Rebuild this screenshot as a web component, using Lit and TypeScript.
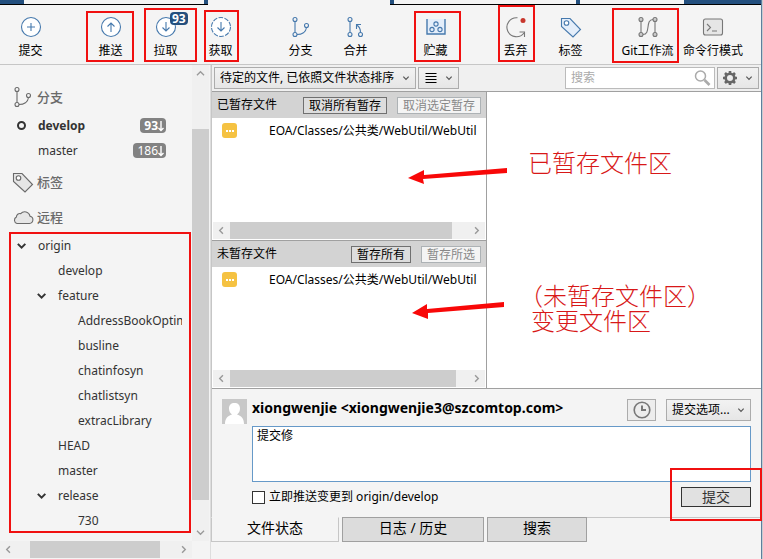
import { LitElement, html, css, svg, nothing } from "lit";
import { customElement, state } from "lit/decorators.js";
import { classMap } from "lit/directives/class-map.js";

const icons: Record<string, unknown> = {
  commit: svg`<circle cx="12" cy="12" r="9.5" fill="#fff"/><path d="M12 8v8M8 12h8"/>`,
  push: svg`<circle cx="12" cy="12" r="9.5" fill="#fff"/><path d="M12 17V8M8.5 11.5L12 8l3.5 3.5"/>`,
  pull: svg`<circle cx="12" cy="12" r="9.5" fill="#fff"/><path d="M12 7v9M8.5 12.5L12 16l3.5-3.5"/>`,
  fetch: svg`<circle cx="12" cy="12" r="9.5" fill="#fff" stroke-dasharray="4.6 1.4"/><path d="M12 7v9M8.5 12.5L12 16l3.5-3.5"/>`,
  branch: svg`<circle cx="6" cy="4.500" r="2"/><circle cx="6" cy="19.500" r="2"/><circle cx="17.500" cy="10.500" r="2"/><path d="M6 6.500v11M8 19.500c5 0 9-2.500 9.500-7"/>`,
  merge: svg`<circle cx="6" cy="4.500" r="2"/><circle cx="6" cy="19.500" r="2"/><circle cx="16.500" cy="19.500" r="2"/><path d="M6 6.500v11M16.500 17.500c0-4-1-6-4-7.500M12.500 14v-4.500h4.500"/>`,
  stash: svg`<path d="M3 4v15h18V4" fill="#e4eefa" stroke-width="1.400"/><circle cx="12" cy="9" r="2.100"/><circle cx="8" cy="14.500" r="2.100"/><circle cx="16" cy="14.500" r="2.100"/>`,
  discard: svg`<path d="M13.500 2.800A9.500 9.500 0 1 0 20 18M20.500 22v-5h-5" /><circle cx="19" cy="5.500" r="2.500" fill="#c8372d" stroke="none"/>`,
  tag: svg`<path d="M2.500 3.500h8.500l10.500 11-7.500 7.500L2.500 11.500z" fill="var(--tag-fill, #e4eefa)"/><circle cx="7.500" cy="8" r="2.300" fill="#fff"/>`,
  flow: svg`<path d="M5 6v12M19 6v12M7 19.500c8 0 2-15 10-15"/><g fill="#ccc"><circle cx="5" cy="4.500" r="2"/><circle cx="5" cy="19.500" r="2"/><circle cx="19" cy="4.500" r="2"/><circle cx="19" cy="19.500" r="2"/></g>`,
  terminal: svg`<rect x="2.500" y="4" width="19" height="16" rx="2" fill="#e6e6e6"/><path d="M6 9l3.500 3.500L6 16M11 16h5"/>`,
  cloud: svg`<path d="M6 18.500h12.500a3.700 3.700 0 0 0 .5-7.300 5.300 5.300 0 0 0-9.300-2.500 3.400 3.400 0 0 0-4.300 3.300A3.500 3.500 0 0 0 6 18.500z" fill="#e6e6e6"/>`,
  down: svg`<path d="M8 10l4 4 4-4" stroke-width="1.800"/>`,
  up: svg`<path d="M7 14.500l5-5 5 5" stroke-width="1.800"/>`,
  downWide: svg`<path d="M7 9.500l5 5 5-5" stroke-width="1.800"/>`,
  left: svg`<path d="M14 7.500l-4.500 4.500L14 16.500" stroke-width="2"/>`,
  right: svg`<path d="M10 7.500l4.500 4.500L10 16.500" stroke-width="2"/>`,
  expand: svg`<path d="M7 9.500l4.500 4.500 4.500-4.500" stroke-width="2.400"/>`,
  lines: svg`<path d="M6.500 7.500h11M6.500 10.500h11M6.500 13.500h11M6.500 16.500h11" stroke-width="1"/>`,
  gear: svg`<circle cx="12" cy="12" r="4.300" stroke-width="2.600"/><path d="M12 5v2.500M12 16.500V19M5 12h2.500M16.500 12H19M7 7l2 2M15 15l2 2M17 7l-2 2M9 15l-2 2" stroke-width="2.600"/>`,
  search: svg`<circle cx="10.500" cy="10" r="5" stroke-width="1.500"/><path d="M14.500 14l5 5" stroke-width="2.600"/>`,
  clock: svg`<circle cx="12" cy="12" r="7.800" stroke-width="1.600"/><path d="M12 7.500V12h4" stroke-width="2"/>`,
  behind: svg`<path d="M12 2v19M7 16l5 5 5-5" stroke-width="2.800"/>`,
};

const icon = (name: string, cls = "") =>
  html`<svg class="icon ${cls}" viewBox="0 0 24 24" aria-hidden="true">${icons[name]}</svg>`;

const toolGroups = [
  [{ icon: "commit", label: "提交" }],
  [
    { icon: "push", label: "推送" },
    { icon: "pull", label: "拉取", badge: "93" },
    { icon: "fetch", label: "获取" },
  ],
  [
    { icon: "branch", label: "分支" },
    { icon: "merge", label: "合并" },
  ],
  [{ icon: "stash", label: "贮藏" }],
  [
    { icon: "discard", label: "丢弃", gray: true },
    { icon: "tag", label: "标签" },
  ],
  [
    { icon: "flow", label: "Git工作流", gray: true, slim: true },
    { icon: "terminal", label: "命令行模式", gray: true, wide: true },
  ],
] as { icon: string; label: string; badge?: string; gray?: boolean; slim?: boolean; wide?: boolean }[][];

const remotes = [
  { name: "origin", level: 0, open: true },
  { name: "develop", level: 1 },
  { name: "feature", level: 1, open: true },
  { name: "AddressBookOptim", level: 2 },
  { name: "busline", level: 2 },
  { name: "chatinfosyn", level: 2 },
  { name: "chatlistsyn", level: 2 },
  { name: "extracLibrary", level: 2 },
  { name: "HEAD", level: 1 },
  { name: "master", level: 1 },
  { name: "release", level: 1, open: true },
  { name: "730", level: 2 },
];

@customElement("app-root")
export class AppRoot extends LitElement {
  @state() private tab = 0;

  static styles = css`
    :host {
      display: flex;
      flex-direction: column;
      position: relative;
      box-sizing: border-box;
      min-height: 100vh;
      overflow: hidden;
      padding-right: 1px;
      border-right: 1px solid #c8ccd0;
      box-shadow: inset -1px 0 #5d7f9d;
      background: #f4f4f4;
      color: #000;
      font: 12px/16px "Noto Sans", "Noto Sans CJK SC", sans-serif;
    }
    * { box-sizing: border-box; }
    button, select, input, textarea { font: inherit; color: inherit; margin: 0; border-radius: 0; }
    button { background: none; border: 0; padding: 0; }
    ul { list-style: none; margin: 0; padding: 0; }
    .icon { width: 24px; height: 24px; fill: none; stroke: currentColor; stroke-width: 1.1; flex: none; display: block; }
    .small { width: 16px; height: 16px; }

    .strip { display: flex; height: 5px; flex: none; }
    .strip span { background: #f4f4f4; border-bottom: 1px solid #000; }
    .strip .navy { background: #234f7e; }
    .strip .plain { border-color: #f4f4f4; }
    .w24 { flex: 0 0 24px; } .w180 { flex: 0 0 180px; } .w4 { flex: 0 0 4px; }
    .w182 { flex: 0 0 182px; } .w104 { flex: 0 0 104px; } .rest { flex: 1; }

    .toolbar { display: flex; gap: 25px; padding: 10px 3px 0; height: 60px; flex: none; border-bottom: 1px solid #c6c6c6; }
    .group { display: flex; flex: none; }
    .tool { position: relative; display: flex; flex: none; flex-direction: column; align-items: center; justify-content: start; gap: 4px; width: 55px; height: 48px; white-space: nowrap; color: #000; }
    .tool.wide { width: 82px; }
    .tool.slim { width: 49px; }
    .tool .icon { color: #4679ad; }
    .tool.gray .icon { color: #777; }
    .badge { position: absolute; left: 32px; top: -3px; padding: 0 2px; border-radius: 4px; background: #234f7e; color: #fff; font-weight: 700; line-height: 13px; }

    .body { flex: 1; display: grid; grid-template-columns: 211px minmax(0, 1fr); min-height: 0; }
    .side { display: grid; grid-template-columns: minmax(0, 1fr) 17px; grid-template-rows: minmax(0, 1fr) 17px; padding: 0 1px 1px 0; border-right: 1px solid #ddd; color: #333; }
    .nav { padding: 13px 10px 0 0; }
    .head { display: flex; align-items: center; gap: 2px; height: 33px; margin: 2px 0 0 11px; color: #6a6a6a; font-weight: 500; font-size: 13px; --tag-fill: #e6e6e6; }
    .row { display: flex; align-items: center; height: 25px; width: 100%; padding-left: 12px; overflow: hidden; white-space: nowrap; text-align: left; }
    .row.level1 { padding-left: 32px; }
    .row.level2 { padding-left: 52px; }
    .mark { flex: 0 0 26px; display: flex; }
    .ring { width: 9px; height: 9px; margin-left: 5px; border: 2px solid #333; border-radius: 50%; }
    .mark .icon { width: 20px; height: 20px; }
    .count { display: flex; align-items: center; margin-left: auto; margin-right: 16px; padding: 0 2px 0 4px; border-radius: 4px; background: #828282; color: #fff; line-height: 15px; }
    .count .icon { width: 12px; height: 12px; margin: 0 -3px; }
    .current { font-weight: 700; }

    .scroll { display: flex; align-items: center; background: #f0f0f0; color: #999; }
    .scroll button { flex: 0 0 17px; height: 17px; }
    .scroll .icon { width: 17px; height: 17px; }
    .scroll .pos { background: #cdcdcd; align-self: stretch; }
    .vert { flex-direction: column; }
    .vert button { width: 17px; }
    .vert .before { flex: 47; } .vert .pos { flex: 371; } .vert .after { flex: 24; }
    .nav-h .before { flex: 13; } .nav-h .pos { flex: 128; } .nav-h .after { flex: 15; }
    .list-a .pos { flex: 222; } .list-a .after { flex: 16; }
    .list-b .pos { flex: 226; } .list-b .after { flex: 12; }

    .main { display: flex; flex-direction: column; min-width: 0; padding-bottom: 17px; }
    .pane { display: flex; flex-direction: column; flex: 1; border-left: 1px solid #c6c6c6; min-height: 0; }
    .filters { display: flex; gap: 2px; height: 27px; padding: 2px; background: #f0f0f0; border-bottom: 1px solid #a0a0a0; }
    .drop { position: relative; display: flex; align-items: center; height: 22px; border: 1px solid #acacac; background: linear-gradient(#f2f2f2, #e6e6e6); }
    .drop select { appearance: none; width: 100%; height: 20px; padding: 0 20px 0 5px; border: 0; background: none; }
    .drop > .small { position: absolute; right: 1px; pointer-events: none; color: #555; }
    .sort { width: 202px; }
    .mode { width: 41px; }
    .cog { width: 42px; color: #666; }
    .find { margin-left: auto; display: flex; align-items: center; width: 150px; height: 22px; border: 1px solid #bbb; background: #fff; color: #aaa; }
    .find input { flex: 1; min-width: 0; border: 0; background: none; padding: 0 5px; outline: 0; }
    .find input::placeholder { color: #aaa; }

    .files { flex: 1; display: grid; grid-template-columns: 275px minmax(0, 1fr); background: #fff; border-bottom: 1px solid #a0a0a0; }
    .lists { display: grid; grid-template-rows: 1fr 1fr; border-right: 1px solid #a0a0a0; }
    .list { display: flex; flex-direction: column; }
    .list + .list { border-top: 1px solid #a0a0a0; }
    .bar { display: flex; align-items: center; gap: 10px; height: 26px; padding: 0 5px; background: #d3d3d3; }
    .bar h2 { flex: 1; margin: 0; font: inherit; }
    .bar button { height: 17px; padding: 0 5px; border: 1px solid #707070; background: #ddd; line-height: 15px; white-space: nowrap; }
    .bar button:disabled { border-color: #adb2b5; background: #f4f4f4; color: #888; }
    .file { display: flex; align-items: center; gap: 32px; height: 25px; padding-left: 10px; white-space: nowrap; overflow: hidden; }
    .status { display: flex; align-items: center; justify-content: center; gap: 1px; width: 15px; height: 15px; flex: none; border-radius: 3px; background: #f5c242; }
    .status i { width: 2px; height: 2px; background: #fff; }
    .list .scroll { height: 17px; margin: auto 1px 1px; }

    .compose { display: grid; grid-template-columns: 25px minmax(0, 1fr); align-content: start; column-gap: 5px; padding: 10px 10px 0; height: 128px; }
    .avatar { width: 25px; height: 25px; display: block; }
    .who { display: flex; align-items: start; gap: 10px; height: 27px; }
    .who strong { flex: 1; font-size: 14px; line-height: 18px; white-space: nowrap; }
    .clock { display: flex; align-items: center; justify-content: center; width: 29px; height: 22px; border: 1px solid #acacac; background: #ededed; color: #777; }
    .clock .icon { width: 24px; height: 24px; }
    .opts { width: 85px; }
    .message { grid-column: 2; display: block; width: 100%; height: 56px; padding: 1px 4px; resize: none; border: 1px solid #6699c8; outline: 0; background: #fff; }
    .submit { grid-column: 2; display: flex; align-items: center; justify-content: space-between; height: 30px; }
    .submit label { display: flex; align-items: center; gap: 4px; }
    .submit input { appearance: none; width: 13px; height: 13px; border: 1px solid #333; background: #fff; }
    .submit button { width: 70px; height: 20px; border: 1px solid #333; background: #e1e1e1; color: #333; font-size: 14px; line-height: 18px; }

    .tabs { display: flex; gap: 3px; height: 25px; flex: none; }
    .tabs button { width: 142px; border: 1px solid #a0a0a0; background: #dcdcdc; font-size: 14px; line-height: 18px; padding-bottom: 4px; }
    .tabs .first { width: 128px; }
    .tabs .last { width: 100px; }
    .tabs button.active { border-color: #f4f4f4 #c6c6c6 #c6c6c6; background: #f4f4f4; }
    .tabs .fill { flex: 1; margin-left: -3px; border-top: 1px solid #c6c6c6; }

    .notes { position: absolute; left: 0; top: 0; width: 763px; height: 559px; pointer-events: none; }
    .notes rect { fill: none; stroke: #f01010; stroke-width: 2; }
    .arrow { fill: #f80808; }
    .note { position: absolute; left: 528px; top: 149px; margin: 0; color: #d81818; font: 24px/25px "Noto Sans CJK SC", sans-serif; font-weight: 300; white-space: nowrap; }
    .note.changed { left: 519px; top: 282px; }
    .note span { display: block; }
    .note .under { padding-left: 12px; }
  `;

  private scroll(cls: string, vertical = false) {
    return html`<div class="scroll ${cls} ${vertical ? "vert" : ""}">
      <button aria-label=${vertical ? "向上滚动" : "向左滚动"}>${icon(vertical ? "up" : "left")}</button>
      <span class="before"></span><span class="pos"></span><span class="after"></span>
      <button aria-label=${vertical ? "向下滚动" : "向右滚动"}>${icon(vertical ? "downWide" : "right")}</button>
    </div>`;
  }

  private list(title: string, all: string, selected: string, cls: string) {
    return html`<section class="list">
      <div class="bar"><h2>${title}</h2><button>${all}</button><button disabled>${selected}</button></div>
      <div class="file"><span class="status"><i></i><i></i><i></i></span><span>EOA/Classes/公共类/WebUtil/WebUtil</span></div>
      ${this.scroll(cls)}
    </section>`;
  }

  private tabButton(index: number, label: string, cls: string) {
    return html`<button role="tab" aria-selected=${this.tab === index}
      class="${cls} ${this.tab === index ? "active" : ""}" @click=${() => (this.tab = index)}>${label}</button>`;
  }

  render() {
    return html`
      <div class="strip">
        <span class="navy w24"></span><span class="w180"></span><span class="navy w4"></span>
        <span class="plain w182"></span><span class="navy w4"></span><span class="w182"></span>
        <span class="navy w4"></span><span class="w104"></span><span class="navy rest"></span>
      </div>
      <nav class="toolbar">
        ${toolGroups.map((group) => html`<div class="group">
          ${group.map((t) => html`<button class=${classMap({ tool: true, gray: !!t.gray, slim: !!t.slim, wide: !!t.wide })}>
            ${icon(t.icon)}<span>${t.label}</span>${t.badge ? html`<span class="badge">${t.badge}</span>` : nothing}
          </button>`)}
        </div>`)}
      </nav>
      <div class="body">
        <aside class="side">
          <div class="nav">
            <div class="head">${icon("branch")}分支</div>
            <button class="row current"><span class="mark"><span class="ring"></span></span>develop<span class="count">93${icon("behind")}</span></button>
            <button class="row"><span class="mark"></span>master<span class="count">186${icon("behind")}</span></button>
            <div class="head">${icon("tag")}标签</div>
            <div class="head">${icon("cloud")}远程</div>
            <ul>
              ${remotes.map((r) => html`<li><button class="row level${r.level}">
                <span class="mark">${r.open ? icon("expand") : nothing}</span>${r.name}
              </button></li>`)}
            </ul>
          </div>
          ${this.scroll("", true)}
          ${this.scroll("nav-h")}
        </aside>
        <main class="main">
          <div class="pane">
            <div class="filters">
              <div class="drop sort">
                <select aria-label="排序"><option>待定的文件, 已依照文件状态排序</option></select>${icon("down", "small")}
              </div>
              <button class="drop mode" aria-label="视图">${icon("lines")}${icon("down", "small")}</button>
              <label class="find"><input aria-label="搜索" placeholder="搜索" />${icon("search")}</label>
              <button class="drop cog" aria-label="设置">${icon("gear")}${icon("down", "small")}</button>
            </div>
            <div class="files">
              <div class="lists">
                ${this.list("已暂存文件", "取消所有暂存", "取消选定暂存", "list-a")}
                ${this.list("未暂存文件", "暂存所有", "暂存所选", "list-b")}
              </div>
              <div class="diff"></div>
            </div>
            <form class="compose" @submit=${(e: Event) => e.preventDefault()}>
              <svg class="avatar" viewBox="0 0 25 25" aria-hidden="true">
                <rect width="25" height="25" fill="#c8c8c8"/>
                <path d="M3 25c0-6 3-8 7-9.500-2-1.500-3-3.500-3-6C7 6 9 4 12.500 4S18 6 18 9.500c0 2.500-1 4.500-3 6 4 1.500 7 3.500 7 9.500z" fill="#fff"/>
              </svg>
              <div class="who">
                <strong>xiongwenjie &lt;xiongwenjie3@szcomtop.com&gt;</strong>
                <button type="button" class="clock" aria-label="历史提交信息">${icon("clock")}</button>
                <div class="drop opts"><select aria-label="提交选项"><option>提交选项...</option></select>${icon("down", "small")}</div>
              </div>
              <textarea class="message" aria-label="提交信息" .value=${"提交修"}></textarea>
              <div class="submit">
                <label><input type="checkbox" />立即推送变更到 origin/develop</label>
                <button>提交</button>
              </div>
            </form>
          </div>
          <div class="tabs" role="tablist">
            ${this.tabButton(0, "文件状态", "first")}
            ${this.tabButton(1, "日志 / 历史", "")}
            ${this.tabButton(2, "搜索", "last")}
            <span class="fill"></span>
          </div>
        </main>
      </div>
      <svg class="notes" viewBox="0 0 763 559" aria-hidden="true">
        <rect x="87" y="12" width="46" height="49"/>
        <rect x="145" y="9" width="51" height="52"/>
        <rect x="205" y="11" width="33" height="50"/>
        <rect x="415" y="12" width="45" height="49"/>
        <rect x="499" y="6" width="35" height="55"/>
        <rect x="613" y="9" width="65" height="53"/>
        <rect x="10" y="233" width="180" height="299"/>
        <rect x="671" y="469" width="90" height="51"/>
        <path class="arrow" d="M408 178L424 170V175L507 168V173L423 179L424 184Z"/>
        <path class="arrow" d="M412 313L427 304V309L504 302V307L428 313V319Z"/>
      </svg>
      <p class="note">已暂存文件区</p>
      <p class="note changed"><span>（未暂存文件区）</span><span class="under">变更文件区</span></p>
    `;
  }
}
